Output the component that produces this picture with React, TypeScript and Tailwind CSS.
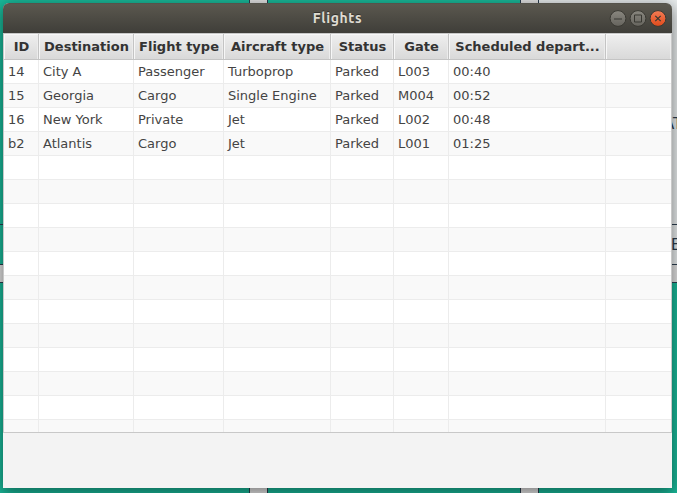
import React from "react";

type Column = { title: string; width: string };

const columns: Column[] = [
  { title: "ID", width: "w-[35px]" },
  { title: "Destination", width: "w-[95px]" },
  { title: "Flight type", width: "w-[90px]" },
  { title: "Aircraft type", width: "w-[107px]" },
  { title: "Status", width: "w-[63px]" },
  { title: "Gate", width: "w-[55px]" },
  { title: "Scheduled depart...", width: "w-[157px]" },
  { title: "", width: "flex-1" },
];

const flights: string[][] = [
  ["14", "City A", "Passenger", "Turboprop", "Parked", "L003", "00:40"],
  ["15", "Georgia", "Cargo", "Single Engine", "Parked", "M004", "00:52"],
  ["16", "New York", "Private", "Jet", "Parked", "L002", "00:48"],
  ["b2", "Atlantis", "Cargo", "Jet", "Parked", "L001", "01:25"],
];

const rows: string[][] = [...flights, ...Array.from({ length: 12 }, () => [])];

function Desktop() {
  return (
    <div className="absolute inset-0 bg-[#1abc9c]">
      <div className="absolute right-0 top-0 h-[283px] w-[138px] border-b border-[#2c3e50] bg-[#ecf0f1]" />
      <div className="absolute left-[249px] top-0 h-full w-[19px] border-x border-[#2c3e50] bg-[#e6e6e6]" />
      <div className="absolute left-[520px] top-0 h-full w-[19px] border-x border-[#2c3e50] bg-[#e6e6e6]" />
      <div className="absolute left-0 top-[224px] h-px w-full bg-[#2c3e50]" />
      <div className="absolute left-0 top-[264px] h-[19px] w-full border-y border-[#2c3e50] bg-[#e6e6e6]" />
      <div className="absolute left-[664px] top-[115px] whitespace-nowrap text-[15px] leading-[18px] text-[#2c3e50]">AT</div>
      <div className="absolute left-[671px] top-[236px] text-[15px] leading-[18px] text-[#2c3e50]">E</div>
    </div>
  );
}

function WindowButtons() {
  return (
    <svg width="60" height="20" viewBox="0 0 60 20" className="shrink-0">
      <defs>
        <linearGradient id="grey" x1="0" y1="0" x2="0" y2="1">
          <stop offset="0" stopColor="#89877f" />
          <stop offset="1" stopColor="#65635d" />
        </linearGradient>
        <linearGradient id="orange" x1="0" y1="0" x2="0" y2="1">
          <stop offset="0" stopColor="#f47c55" />
          <stop offset="1" stopColor="#df4a1b" />
        </linearGradient>
      </defs>
      <circle cx="10" cy="9.5" r="7.9" fill="url(#grey)" stroke="#393832" />
      <path d="M6 10h8" stroke="#393832" fill="none" />
      <circle cx="30" cy="9.5" r="7.9" fill="url(#grey)" stroke="#393832" />
      <path d="M26.5 6h7v7h-7z" stroke="#393832" fill="none" />
      <circle cx="50" cy="9.5" r="7.9" fill="url(#orange)" stroke="#393832" />
      <path d="M47.3 6.8l5.4 5.4M52.7 6.8l-5.4 5.4" stroke="#393832" strokeWidth="1.2" fill="none" />
    </svg>
  );
}

function TitleBar() {
  return (
    <div className="flex h-[30px] shrink-0 items-center rounded-t-[6px] border-t border-[#55534b] bg-linear-to-b from-[#5b584f] to-[#3f3e39] pr-[4px]">
      <div className="w-[64px]" />
      <div className="flex-1 pb-[2px] text-center font-['Ubuntu','Noto_Sans',sans-serif] text-[14px] font-bold leading-5 tracking-[0.6px] text-[#dfdbd2] [text-shadow:0_-1px_0_#33322d]">
        Flights
      </div>
      <WindowButtons />
    </div>
  );
}

function FlightTable() {
  return (
    <div className="flex h-[400px] flex-col overflow-hidden border border-[#c8c8c8] bg-white">
      <div className="flex h-[26px] shrink-0 border-b border-[#c4c4c4]">
        {columns.map((c, i) => (
          <div
            key={i}
            className={`${c.width} flex shrink-0 items-center justify-center whitespace-pre border-r border-[#c4c4c4] bg-linear-to-b from-[#efefef] to-[#d9d9d9] pl-px pt-px text-[13px] font-bold text-[#333333] shadow-[inset_1px_1px_0_#f7f7f7,inset_-1px_0_0_#ececec] last:border-r-0`}
          >
            {c.title}
          </div>
        ))}
      </div>
      {rows.map((row, r) => (
        <div key={r} className="flex h-6 shrink-0 border-b border-[#ececec] even:bg-white odd:bg-[#f9f9f9]">
          {columns.map((c, i) => (
            <div
              key={i}
              className={`${c.width} shrink-0 whitespace-pre border-r border-[#ececec] pl-1 text-[13px] leading-[23px] text-[#444444] last:border-r-0`}
            >
              {row[i] ?? ""}
            </div>
          ))}
        </div>
      ))}
    </div>
  );
}

export default function App() {
  return (
    <div className="relative h-[493px] w-[677px] overflow-hidden font-['DejaVu_Sans',sans-serif]">
      <Desktop />
      <div className="absolute left-[3px] top-[3px] flex h-[485px] w-[669px] flex-col rounded-t-[6px] bg-[#f3f3f3] shadow-[0_4px_16px_2px_rgba(0,0,0,0.45)]">
        <TitleBar />
        <FlightTable />
      </div>
    </div>
  );
}
